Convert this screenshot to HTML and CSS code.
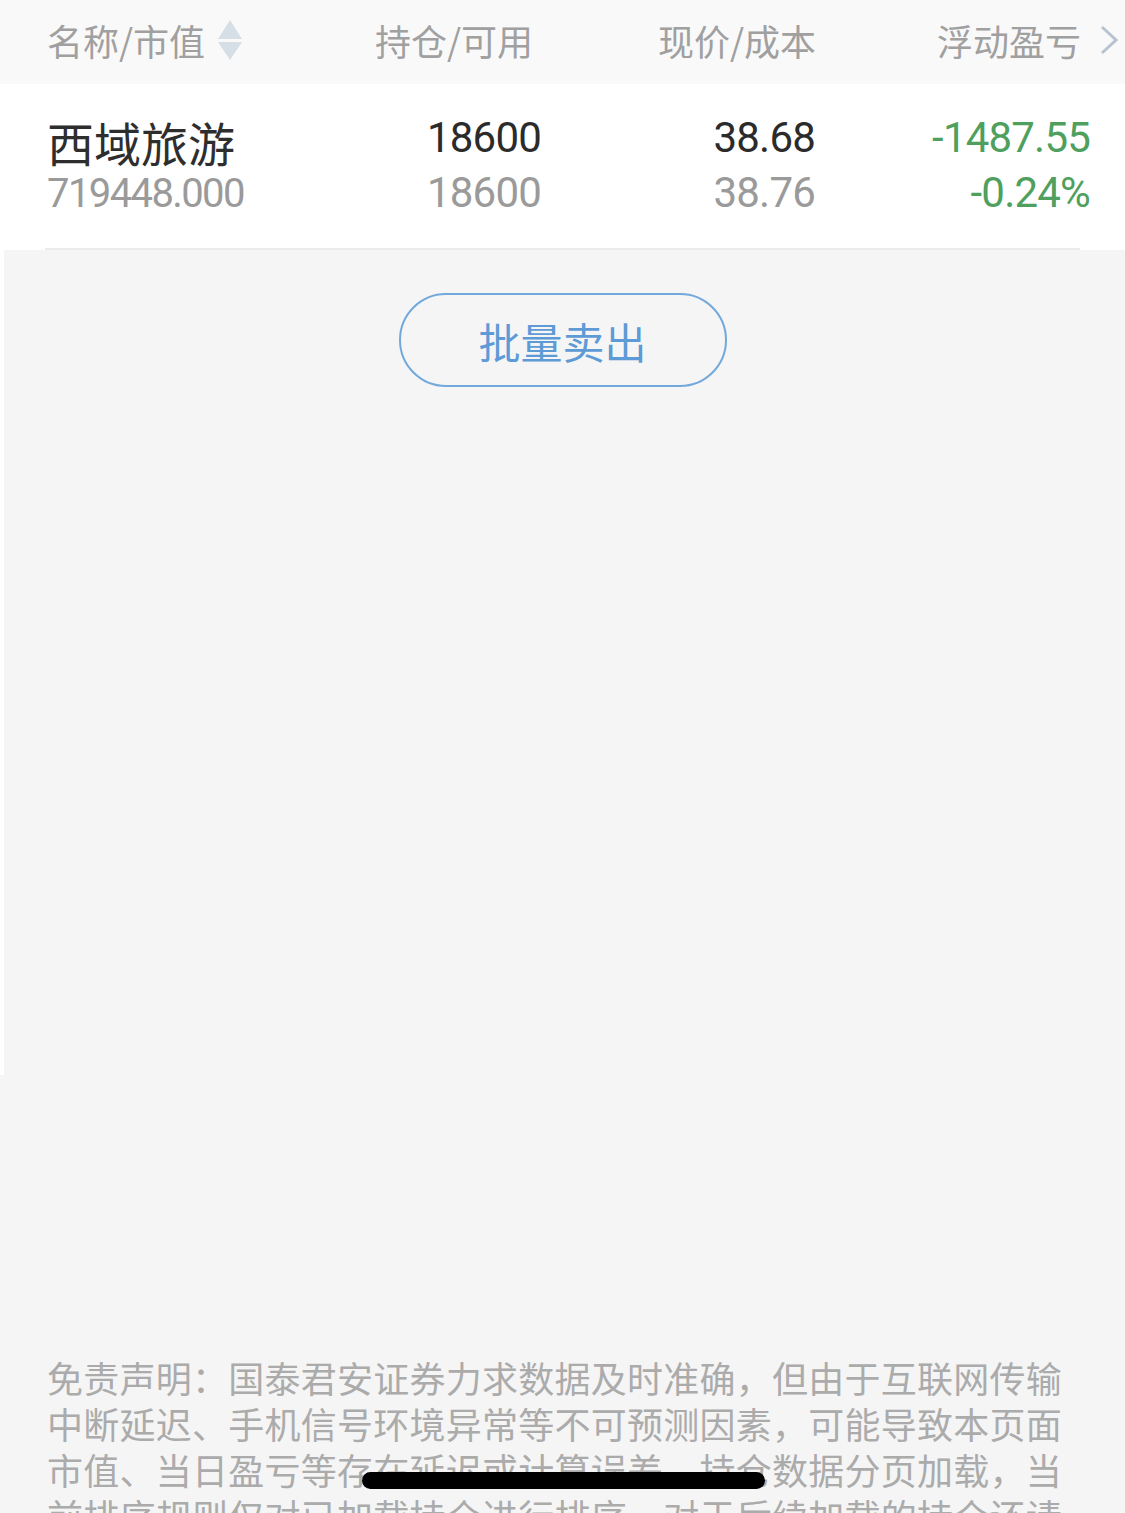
FILE: index.html
```html
<!DOCTYPE html>
<html lang="zh-CN">
<head>
    <meta charset="UTF-8">
    <meta name="viewport" content="width=device-width, initial-scale=1.0">
    <title>持仓</title>
    <link rel="stylesheet" href="styles.css">
</head>
<body>

    <!-- Column header -->
    <div class="list-header">
        <div class="col col-name">
            名称/市值
            <svg class="sort-icon" width="24" height="40" viewBox="0 0 24 40">
                <polygon points="12,0 24,19 0,19" fill="#d6dee6"/>
                <polygon points="0,22 24,22 12,40" fill="#d6dee6"/>
            </svg>
        </div>
        <div class="col col-right">持仓/可用</div>
        <div class="col col-right">现价/成本</div>
        <div class="col col-right col-last">
            浮动盈亏
            <svg class="more-icon" width="18" height="30" viewBox="0 0 18 30">
                <polyline points="2,2 16,15 2,28" fill="none" stroke="#b6c3d0" stroke-width="3"/>
            </svg>
        </div>
    </div>

    <!-- Position row -->
    <div class="position">
        <div class="position-row">
            <div class="cell cell-name">
                <div class="stock-name">西域旅游</div>
                <div class="stock-value">719448.000</div>
            </div>
            <div class="cell cell-num">
                <div class="num-main">18600</div>
                <div class="num-sub">18600</div>
            </div>
            <div class="cell cell-num">
                <div class="num-main">38.68</div>
                <div class="num-sub">38.76</div>
            </div>
            <div class="cell cell-num">
                <div class="num-main loss">-1487.55</div>
                <div class="num-sub loss">-0.24%</div>
            </div>
        </div>
        <div class="divider"></div>
    </div>

    <!-- Actions -->
    <div class="actions">
        <button class="sell-button">批量卖出</button>
    </div>

    <!-- Disclaimer -->
    <div class="disclaimer">
        免责声明：国泰君安证券力求数据及时准确，但由于互联网传输中断延迟、手机信号环境异常等不可预测因素，可能导致本页面市值、当日盈亏等存在延迟或计算误差，持仓数据分页加载，当前排序规则仅对已加载持仓进行排序，对于后续加载的持仓还请下拉刷新后重新排序。
    </div>

    <div class="home-indicator"></div>

</body>
</html>
```

FILE: styles.css
```css
/* General Reset */
* {
    margin: 0;
    padding: 0;
    box-sizing: border-box;
}

body {
    width: 1125px;
    height: 1513px;
    overflow: hidden;
    position: relative;
    background-color: #f5f5f5;
    font-family: "Noto Sans CJK SC", "Noto Sans", sans-serif;
    color: #333;
}

/* Header */
.list-header {
    display: grid;
    grid-template-columns: 1fr 251px 283px 302px;
    align-items: center;
    height: 84px;
    padding: 0 7px 4px 47px;
    background-color: #f9f9f9;
    font-size: 36px;
    color: #a0a0a0;
}

.col {
    display: flex;
    align-items: center;
    white-space: nowrap;
}

.col-right {
    justify-content: flex-end;
}

.sort-icon {
    margin-left: 13px;
}

.more-icon {
    margin-left: 19px;
}

/* Position Row */
.position {
    background-color: #fff;
}

.position-row {
    display: grid;
    grid-template-columns: 1fr 260px 274px 275px;
    padding: 26px 35px 28px 47px;
}

.cell-name {
    padding-top: 6px;
}

.stock-name {
    font-size: 47px;
    line-height: 52px;
    color: #2e2e2e;
}

.stock-value {
    font-family: Roboto, "Liberation Sans", sans-serif;
    font-size: 40px;
    line-height: 52px;
    letter-spacing: -1.6px;
    color: #9a9a9a;
}

.cell-num {
    text-align: right;
    font-family: Roboto, "Liberation Sans", sans-serif;
    font-size: 42px;
    line-height: 55px;
    letter-spacing: -0.8px;
}

.num-main {
    color: #2b2b2b;
}

.num-sub {
    color: #9a9a9a;
}

.loss {
    color: #4f9f5e;
}

.divider {
    height: 2px;
    margin: 0 45px;
    background-color: #ebebeb;
}

/* Actions */
.actions {
    height: 825px;
    padding-top: 43px;
    border-left: 4px solid #fff;
    text-align: center;
}

.sell-button {
    width: 328px;
    height: 94px;
    margin-left: -4px;
    border: 2px solid #72a8db;
    border-radius: 47px;
    background-color: transparent;
    font-family: "Noto Sans CJK SC", sans-serif;
    font-size: 42px;
    color: #5e9bd6;
    cursor: pointer;
}

/* Disclaimer */
.disclaimer {
    width: 1062px;
    padding: 279px 0 0 47px;
    font-size: 36px;
    line-height: 46px;
    letter-spacing: 0.25px;
    color: #ababab;
}

/* Home indicator overlay */
.home-indicator {
    position: absolute;
    left: 362px;
    top: 1472px;
    width: 403px;
    height: 17px;
    border-radius: 9px;
    background-color: #000;
}
```
